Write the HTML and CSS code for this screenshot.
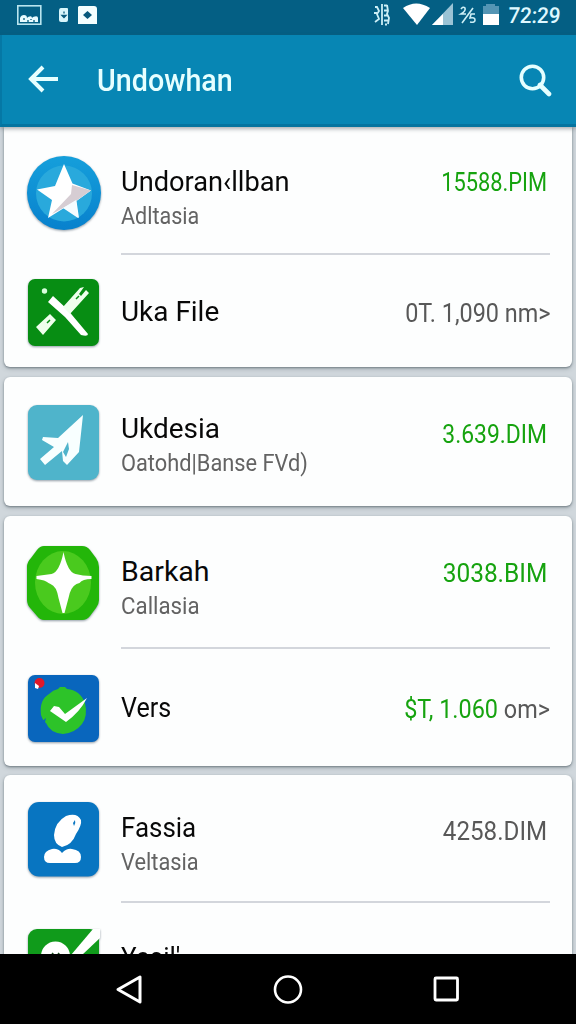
FILE: index.html
```html
<!DOCTYPE html>
<html lang="en">
<head>
<meta charset="utf-8">
<title>Undowhan</title>
<link rel="stylesheet" href="styles.css">
</head>
<body>
<div class="screen">
  <header class="status">
    <svg class="status-left" width="100" height="35" viewBox="0 0 100 35">
      <rect x="17.8" y="5.8" width="23" height="18.4" fill="none" stroke="#b9e4ee" stroke-width="1.6"/>
      <path d="M20 22v-4q1-3 4-3t3 3l1-1q4-2 4 1l1-1q5-2 5 1v4z" fill="#e8fbff"/>
      <path d="M24 20v-2m4 4v-2m3 0v-1m3 3v-2" stroke="#075a7c" stroke-width="1.3"/>
      <path d="M61 8h6q1 0 1 1v11q0 2-2 2h-5q-2 0-2-2v-9q0-3 2-3z" fill="#d8f6fb"/>
      <path d="M64 11.500v2m-2 2 2 2 2-2z" fill="#075a7c" stroke="#075a7c" stroke-width="1.3"/>
      <path d="M79 6h15q3 0 3 3v15H78V7z" fill="#f4ffff"/>
      <path d="m87.500 11 4.500 4-4.500 4-4.500-4z" fill="#075a7c"/>
    </svg>
    <div class="status-right">
      <svg width="133" height="35" viewBox="0 0 133 35">
        <path d="M3 7h2l2 4-2 3 2 5-4 3M5 13H2M10 4v21M12 5.500h3m-3 5h3m-3 5h4m-4 5h4m-3 4h2M15 5l1 6-1 3 2 4-1 6" fill="none" stroke="#cceff6" stroke-width="1.800"/>
        <path d="M31 8q13-9 27 0L45 25z" fill="#fff"/>
        <path d="M81 3v22H60z" fill="#9ac3d5"/>
        <path d="M71 14v11H60z" fill="#fff"/>
        <path d="M89 9q2-3 4-1 1 3-4 6h5M101 8 90 23" fill="none" stroke="#cceff6" stroke-width="1.6"/>
        <path d="M103 14h-4l-1 4q5-1 5 2 0 3-5 2" fill="none" stroke="#cceff6" stroke-width="1.6"/>
        <path d="M111 6h3V4h9v2h4v8h-16z" fill="#5495b4"/>
        <path d="M111 14h16v11h-16z" fill="#fff"/>
      </svg>
      <span class="clock">72:29</span>
    </div>
  </header>

  <div class="appbar">
    <svg class="back" width="32" height="32" viewBox="0 0 32 32"><path d="M16 4 4 16l12 12M4 16h27" fill="none" stroke="#e6ffff" stroke-width="4"/></svg>
    <h1 class="heading">Undowhan</h1>
    <svg class="search" width="34" height="34" viewBox="0 0 34 34"><circle cx="14.500" cy="14.500" r="11.200" fill="none" stroke="#e6ffff" stroke-width="3.600"/><path d="m22 22 9 9" stroke="#e6ffff" stroke-width="4.600" stroke-linecap="round"/></svg>
  </div>

  <main class="list">
    <section class="card card-first">
      <div class="row row-star">
        <svg class="icon" width="76" height="80" viewBox="0 0 76 80">
          <defs><linearGradient id="ring" x2="0" y2="1"><stop stop-color="#159fdb"/><stop offset="1" stop-color="#0881cd"/></linearGradient></defs>
          <circle cx="38" cy="38" r="37" fill="url(#ring)"/>
          <circle cx="38" cy="38.500" r="28" fill="#29a9dc"/>
          <path d="m38 9 8.500 19.500L65 35.500 50.500 46 53 63 38 53 22 63 26 45 11 34.500 29 31z" fill="#fff"/>
          <path d="M46 30 65 35.500 50 46 26 59l19-20z" fill="#d6cdd3"/>
          <path d="m50 45-13 8 15 10z" fill="#f5fcff"/>
        </svg>
        <div class="texts"><div class="name s95">Undoran‹llban</div><div class="sub s88">Adltasia</div></div>
        <div class="amount green s84">15588.PIM</div>
      </div>
      <div class="row row-file">
        <svg class="icon" width="76" height="72" viewBox="0 0 76 72">
          <rect x="2" y="1" width="71" height="67" rx="7" fill="#078d13"/>
          <circle cx="18.500" cy="13" r="2.700" fill="#d8ffdc"/>
          <path d="m22 24 5-6 14 13 21 25q0 3-7 1L39 39z" fill="#fff"/>
          <path d="m37 29 17-19 4-1-5 7 2 2 5-6 3 3-19 21zM10 49l14-13 6 6-13 15z" fill="#efffed"/>
          <path d="m50 21 3-3M21 45l3-3" stroke="#078d13" stroke-width="1.500" fill="none"/>
        </svg>
        <div class="texts"><div class="name s98">Uka File</div></div>
        <div class="amount s90">0T. 1,090 nm&gt;</div>
      </div>
    </section>

    <section class="card">
      <div class="row row-plane">
        <svg class="icon" width="76" height="80" viewBox="0 0 76 80">
          <rect x="2" y="1" width="71" height="75" rx="9" fill="#4fb4cb"/>
          <path d="M57 11 53 48 41 61l-4-4-1-10-17 14-5-6 14-12-12-7 1-3 15 1z" fill="#f8ffff"/>
          <path d="m42 38-5 10 3 5 3-8z" fill="#4fb4cb"/>
        </svg>
        <div class="texts"><div class="name s98">Ukdesia</div><div class="sub s89">Oatohd|Banse FVd)</div></div>
        <div class="amount green s88">3.639.DIM</div>
      </div>
    </section>

    <section class="card">
      <div class="row row-spark">
        <svg class="icon" width="76" height="80" viewBox="0 0 76 80">
          <path d="M18 1h38q5 0 8 4l6 8q3 4 3 9v33q0 4-3 8l-6 8q-3 4-8 4H18q-4 0-7-4l-6-7q-4-4-4-9V22q0-5 4-9l6-8q3-4 7-4z" fill="#23b609"/>
          <ellipse cx="37" cy="37.500" rx="28" ry="31.500" fill="#4aca1e"/>
          <path d="M37.500 7q4 20 12 22 7 2 16 2v3q-9 0-12 4l-3 1q-6 3-8 14l-4 15h-2l-4-15q-2-12-8-14l-2-1q-3-3-12-4v-3l15-2q8-2 12-22z" fill="#fff"/>
        </svg>
        <div class="texts"><div class="name">Barkah</div><div class="sub s91">Callasia</div></div>
        <div class="amount green s94">3038.BIM</div>
      </div>
      <div class="row row-check">
        <svg class="icon" width="76" height="72" viewBox="0 0 76 72">
          <rect x="2" y="1" width="71" height="67" rx="7" fill="#0966bd"/>
          <circle cx="13.500" cy="9" r="5" fill="#df1829"/><path d="m9 9 4 3-1 3-3-1z" fill="#fff"/>
          <path d="m32 15 2-2h5l2 2q13 1 18 14 3 13-3 21-7 9-19 10-13-1-17-11-3-2-5-8-2-15 8-21 4-4 9-5z" fill="#2dc329"/>
          <path d="m14 49 6-5-1 4-3 2z" fill="#0966bd"/>
          <path d="m24 37 4-5 5 1 6 7 22-16q-7 14-21 24z" fill="#fff"/>
        </svg>
        <div class="texts"><div class="name s88">Vers</div></div>
        <div class="amount s90"><span class="green">$T, 1.060</span> om&gt;</div>
      </div>
    </section>

    <section class="card">
      <div class="row row-person">
        <svg class="icon" width="76" height="80" viewBox="0 0 76 80">
          <rect x="2" y="1" width="71" height="74.500" rx="11" fill="#0875c1"/>
          <path d="M36 46q-8-3-8-12 1-13 12-19 11-4 15 4 1 5-5 14-4 11-14 13z" fill="#fff"/>
          <path d="M24 62q-6 0-6-6 0-6 8-8 6-1 10 4 5-5 10-4 9 1 9 8 0 6-6 6z" fill="#fff"/>
          <path d="m49 19-2 3 1 3q2-3 1-6z" fill="#0875c1"/>
        </svg>
        <div class="texts"><div class="name s91">Fassia</div><div class="sub s89">Veltasia</div></div>
        <div class="amount s93">4258.DIM</div>
      </div>
      <div class="row row-last">
        <svg class="icon" width="76" height="72" viewBox="0 0 76 72">
          <rect x="2" y="0" width="71" height="68" rx="9" fill="#109b1b"/>
          <path d="M67 0h7v9L56 26H45z" fill="#fff"/>
          <circle cx="29.500" cy="27" r="14.500" fill="#fff"/>
          <path d="m26 24 2 2m4-2 2 2" stroke="#174b1a" stroke-width="1.500"/>
        </svg>
        <div class="texts"><div class="name s91">Yasil'</div></div>
      </div>
    </section>
  </main>

  <nav class="nav">
    <svg width="30" height="34" viewBox="0 0 30 34"><path d="M26 4v25L4 16.500z" fill="none" stroke="#fff" stroke-width="3" stroke-linejoin="round"/></svg>
    <svg width="32" height="34" viewBox="0 0 32 34"><circle cx="16" cy="16.500" r="13" fill="none" stroke="#fff" stroke-width="2.600"/></svg>
    <svg width="30" height="34" viewBox="0 0 30 34"><rect x="4" y="5" width="22.500" height="22" rx="1" fill="none" stroke="#fff" stroke-width="2.800"/></svg>
  </nav>
</div>
</body>
</html>
```
FILE: styles.css
```css
* { box-sizing: border-box; }
body { margin: 0; font-family: Roboto, "Liberation Sans", sans-serif; }
.screen {
  width: 576px;
  height: 1024px;
  display: flex;
  flex-direction: column;
  overflow: hidden;
  background: #d0d7dc;
}
.status {
  height: 35px;
  flex: none;
  display: flex;
  justify-content: space-between;
  background: #045f84;
}
.status-right { display: flex; width: 204px; }
.status-right svg { flex: none; }
.clock {
  font-size: 22px;
  line-height: 32px;
  font-weight: 500;
  color: #dff8ff;
  margin-left: 3px;
  transform: scaleX(.94) skewX(-4deg);
  transform-origin: left;
}
.appbar {
  height: 92px;
  flex: none;
  display: flex;
  align-items: center;
  padding: 0 24px 4px 28px;
  background: #0786b4;
  border-bottom: 3px solid #05749f;
  border-left: 2px solid #0578a5;
  box-shadow: 0 2px 4px rgba(70, 80, 85, .45);
  z-index: 1;
}
.back { flex: none; margin: 2px 0 0 -3px; }
.heading {
  margin: 7px 0 0 38px;
  flex: 1;
  font-size: 31px;
  line-height: 36px;
  font-weight: 500;
  color: #e6ffff;
  transform: scaleX(.925);
  transform-origin: left;
}
.search { flex: none; margin-top: 5px; }
.list {
  flex: 1;
  min-height: 0;
  overflow: hidden;
  display: flex;
  flex-direction: column;
  gap: 10px;
  padding: 0 4px;
}
.card {
  flex: none;
  background: #fdfefe;
  border-radius: 6px;
  box-shadow: 0 1px 2px #78848b, 0 2px 4px rgba(90, 100, 108, .35);
}
.card-first { border-radius: 0 0 6px 6px; }
.card:last-child { margin-top: -1px; }
.row {
  display: flex;
  align-items: flex-start;
  padding: 0 22px;
}
.icon {
  flex: none;
  filter: drop-shadow(0 1px 1px rgba(40, 60, 80, .5));
}
.texts {
  flex: 1;
  min-width: 0;
  margin-left: 19px;
  white-space: nowrap;
}
.name {
  font-size: 28.5px;
  line-height: 34px;
  color: #080808;
  transform-origin: left;
}
.sub {
  font-size: 24.5px;
  line-height: 34px;
  color: #636363;
  transform-origin: left;
}
.amount {
  flex: none;
  font-size: 26px;
  line-height: 32px;
  color: #585858;
  white-space: nowrap;
  transform-origin: right;
}
.green { color: #16a30f; }

.row-star { height: 126px; padding-top: 28px; }
.row-star .texts { padding-top: 10px; }
.row-star .amount { padding-top: 11px; }
.row-file { height: 114px; padding-top: 25px; }
.row-file .texts { padding-top: 17px; }
.row-file .amount { padding-top: 19px; }
.row-plane { height: 129px; padding-top: 27px; }
.row-plane .texts { padding-top: 8px; }
.row-plane .amount { padding-top: 14px; }
.row-spark { height: 131px; padding-top: 29px; }
.row-spark .texts { padding-top: 10px; }
.row-spark .amount { padding-top: 12px; }
.row-check { height: 119px; padding-top: 27px; }
.row-check .texts { padding-top: 17px; }
.row-check .amount { padding-top: 19px; }
.row-person { height: 126px; padding-top: 26px; }
.row-person .texts { padding-top: 10px; }
.row-person .amount { padding-top: 14px; }
.row-last { height: 116px; padding-top: 28px; }
.row-last .texts { padding-top: 12px; }
.row-star .amount, .row-plane .amount, .row-spark .amount, .row-person .amount { margin-right: 3px; }

/* Divider between rows, inset to the text column */
.row + .row {
  background: linear-gradient(#d3d6dc, #d3d6dc) 117px 0 / 429px 2px no-repeat;
}

/* Condensed widths */
.s84 { transform: scaleX(.84); }
.s88 { transform: scaleX(.88); }
.s89 { transform: scaleX(.89); }
.s90 { transform: scaleX(.9); }
.s91 { transform: scaleX(.91); }
.s93 { transform: scaleX(.93); }
.s94 { transform: scaleX(.94); }
.s95 { transform: scaleX(.955); }
.s98 { transform: scaleX(.98); }

.nav {
  height: 70px;
  flex: none;
  display: flex;
  justify-content: space-between;
  align-items: center;
  padding: 2px 115px 0 114px;
  background: #000;
  z-index: 1;
}
```
